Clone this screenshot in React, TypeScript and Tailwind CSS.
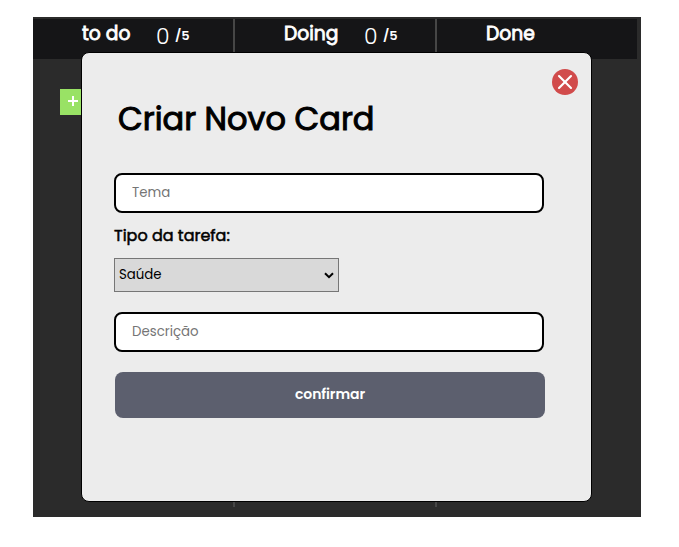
import { X } from "lucide-react";

function Counter() {
  return (
    <>
      <span className="mt-[2px] w-[19px] text-[22px] leading-8 font-light">0</span>
      <span className="mt-[1px] text-[13px] leading-8 font-semibold">/5</span>
    </>
  );
}

function Modal() {
  return (
    <section className="absolute top-[35px] left-12 flex h-[450px] w-[511px] flex-col rounded-lg border border-black bg-[#ececec] px-8 text-black">
      <button aria-label="Fechar" className="mt-4 -mr-[19px] flex size-[26px] items-center justify-center self-end rounded-full bg-[#d14b4b] text-white">
        <X size={24} strokeWidth={2.1} className="shrink-0" />
      </button>
      <h1 className="mt-1 ml-1 h-10 text-[32px] leading-10 font-normal whitespace-nowrap [-webkit-text-stroke:1px_black]">Criar Novo Card</h1>
      <input placeholder="Tema" className="mt-[34px] h-10 w-[430px] shrink-0 rounded-lg border-2 border-black bg-white px-4 text-[13.33px] placeholder:text-[#757575]" />
      <label className="mt-[11px] h-6 text-base leading-6 font-normal [-webkit-text-stroke:0.5px_black]">Tipo da tarefa:</label>
      <div className="mt-[10px] flex h-[34px] w-[225px] items-center justify-between border border-[#767676] bg-[#d9d9d9] pr-1 pl-1 text-[13.33px]">
        <span>Saúde</span>
        <svg width="10" height="7" viewBox="0 0 10 7" fill="none">
          <path d="M1 1.2L5 5.2L9 1.2" stroke="black" strokeWidth="2" />
        </svg>
      </div>
      <input placeholder="Descrição" className="mt-5 h-10 w-[430px] shrink-0 rounded-lg border-2 border-black bg-white px-4 text-[13.33px] placeholder:text-[#757575]" />
      <button className="mt-5 ml-px h-[46px] w-[430px] shrink-0 rounded-lg bg-[#5c5f6e] pb-0.5 text-sm font-semibold tracking-[-0.1px] text-white">confirmar</button>
    </section>
  );
}

export default function App() {
  return (
    <main className="h-[547px] w-[679px] overflow-hidden bg-white pt-[17px] pl-[33px] font-['Poppins','Inter',sans-serif] text-white">
      <div className="relative h-[500px] w-[608px] bg-[#2b2b2b] pt-0.5">
        <div className="grid h-[488px] w-[604px] grid-cols-[202px_202px_200px]">
          <div className="flex flex-col border-r-2 border-[#464646]">
            <header className="flex h-10 bg-[#151517] pl-[49px]">
              <h2 className="w-[74px] text-[18.72px] leading-[30px] font-normal [-webkit-text-stroke:0.8px_white]">to do</h2>
              <Counter />
            </header>
            <button className="mt-[30px] ml-[27px] flex h-[26px] w-[26px] items-start bg-[#99e265] pt-[7px] pl-2">
              <svg width="10" height="10" viewBox="0 0 10 10" shapeRendering="crispEdges">
                <path d="M4 0h2v4h4v2H6v4H4V6H0V4h4z" fill="white" />
              </svg>
            </button>
          </div>
          <div className="border-r-2 border-[#464646]">
            <header className="flex h-10 bg-[#151517] pl-[49px]">
              <h2 className="w-[80px] text-[18.72px] leading-[30px] font-normal [-webkit-text-stroke:0.8px_white]">Doing</h2>
              <Counter />
            </header>
          </div>
          <div>
            <header className="flex h-10 bg-[#151517] pl-[49px]">
              <h2 className="text-[18.72px] leading-[30px] font-normal [-webkit-text-stroke:0.8px_white]">Done</h2>
            </header>
          </div>
        </div>
        <Modal />
      </div>
    </main>
  );
}
